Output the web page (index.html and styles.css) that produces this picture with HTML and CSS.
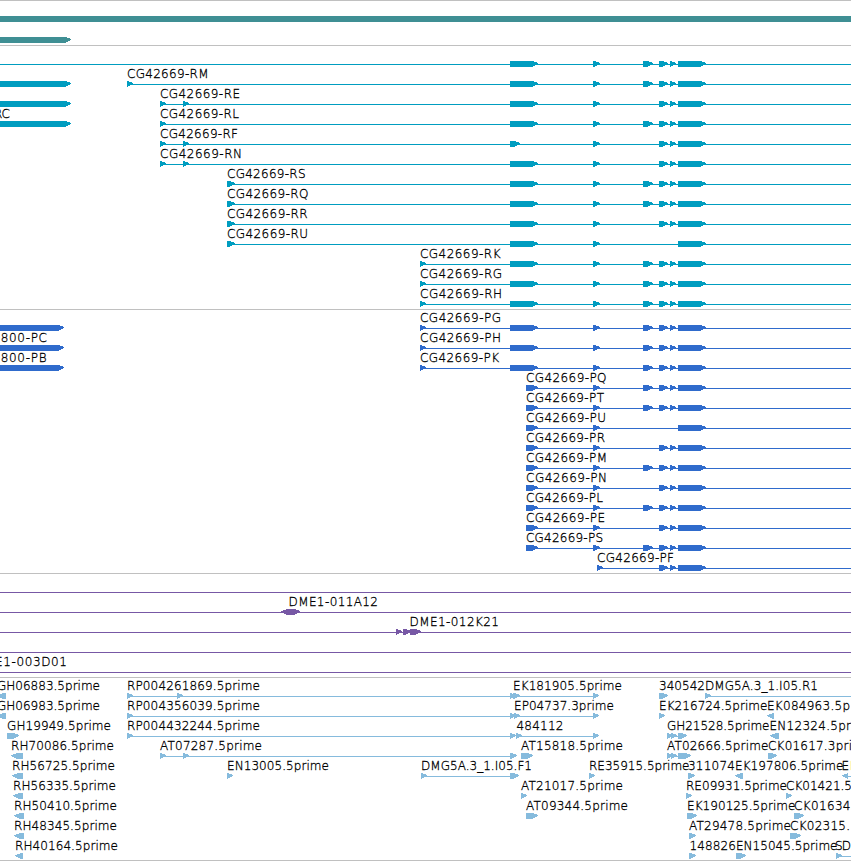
FILE: index.html
```
<!DOCTYPE html>
<html lang="en">
<head>
<meta charset="utf-8">
<title>Genome tracks</title>
<link rel="stylesheet" href="styles.css">
</head>
<body>
<main class="browser" id="browser"></main>
<script src="tracks.js"></script>
</body>
</html>
```
FILE: styles.css
```
body {
  margin: 0;
  background: #fff;
  overflow: hidden;
}

.browser {
  display: flex;
  flex-direction: column;
  width: 851px;
  border-bottom: 1px solid #c0c0c0;
}

.track {
  display: flex;
  flex-direction: column;
  padding: 1px 0 2px;
  border-top: 1px solid #c0c0c0;
}

.track-gene { color: #3f8f94; gap: 1px; }
.track-transcript { color: #009dc0; }
.track-protein { color: #2f6bcc; }
.track-clone { color: #7758a5; }
.track-est { color: #86bbdd; padding-bottom: 1px; }

.row {
  display: block;
  width: 851px;
  height: 20px;
  fill: currentColor;
  shape-rendering: crispEdges;
}

.row text {
  font: 200 12px "DejaVu Sans Light", "DejaVu Sans", sans-serif;
  fill: #000;
  stroke: #000;
  stroke-width: 0.3px;
  shape-rendering: auto;
}
```
FILE: tracks.js
```
// Feature: [start, end, direction]; direction is 1 (right, default), -1 (left), 2 (both) or 0 (plain).
// Label: [text, start, end]. Line: [start, end].
const A = [510, 538], B = [593, 600], C = [643, 653], D = [659, 668], E = [670, 676], F = [678, 706];
const all = [A, B, C, D, E, F], noC = [A, B, D, E, F];

const model = (name, start, end, first, exons, extra = []) => ({
  labels: name ? [[name, start, end]] : [],
  lines: [[start, 851]],
  features: [...first, ...exons, ...extra]
});
const left = (row, end, labels = []) => ({
  ...row, labels: [...row.labels, ...labels], features: [...row.features, [-10, end]]
});

const tracks = [
  { kind: "gene", rows: [
    { features: [[0, 851, 0]] },
    { features: [[-10, 71]] }
  ]},
  { kind: "transcript", rows: [
    model("", 0, 0, [], all),
    left(model("CG42669-RM", 127, 208.5, [[127, 133]], all), 71),
    left(model("CG42669-RE", 160, 240, [[160, 166], [183, 189]], noC), 71),
    left(model("CG42669-RL", 160, 239, [[160, 166]], all), 71, [["RC", -6, 10]]),
    model("CG42669-RF", 160, 238, [[160, 166], [183, 189], [510, 520]], [B, D, E, F]),
    model("CG42669-RN", 160, 242, [[160, 166], [183, 189]], noC),
    model("CG42669-RS", 227, 305.5, [[227, 235]], all),
    model("CG42669-RQ", 227, 308.5, [[227, 235]], all),
    model("CG42669-RR", 227, 307.5, [[227, 235]], noC),
    model("CG42669-RU", 227, 308, [[227, 235]], [A, B, F]),
    model("CG42669-RK", 420, 500.5, [[420, 426]], all),
    model("CG42669-RG", 420, 502, [[420, 426]], all),
    model("CG42669-RH", 420, 502, [[420, 426]], all)
  ]},
  { kind: "protein", rows: [
    left(model("CG42669-PG", 420, 501, [[420, 426]], all), 64),
    left(model("CG42669-PH", 420, 501, [[420, 426]], all), 64, [["800-PC", 0.7, 47]]),
    left(model("CG42669-PK", 420, 499, [[420, 426]], all), 64, [["800-PB", 0.7, 46.5]]),
    model("CG42669-PQ", 526, 606.5, [[526, 538]], [B, C, D, E, F]),
    model("CG42669-PT", 526, 604, [[526, 538]], [B, C, D, E, F]),
    model("CG42669-PU", 526, 606, [[526, 538]], [B, F]),
    model("CG42669-PR", 526, 605, [[526, 538]], [B, D, E, F]),
    model("CG42669-PM", 526, 607, [[526, 538]], [B, C, D, E, F]),
    model("CG42669-PN", 526, 607, [[526, 538]], [B, D, E, F]),
    model("CG42669-PL", 526, 603, [[526, 538]], [B, C, D, E, F]),
    model("CG42669-PE", 526, 605, [[526, 538]], [B, D, E, F]),
    model("CG42669-PS", 526, 603, [[526, 538]], [B, C, D, E, F]),
    model("CG42669-PF", 597, 674, [[597, 603]], [D, E, F])
  ]},
  { kind: "clone", rows: [
    { lines: [[0, 851]] },
    { lines: [[0, 851]], features: [[281, 300, 2]], labels: [["DME1-011A12", 288.5, 378]] },
    { lines: [[0, 851]], features: [[396, 402], [403, 411], [410, 421]], labels: [["DME1-012K21", 409.5, 499]] },
    { lines: [[0, 851]] },
    { lines: [[0, 851]], labels: [["E1-003D01", -5, 67]] }
  ]},
  { kind: "est", rows: [
    { lines: [[127, 595], [705, 851]],
      features: [[-3, 6, -1], [127, 133], [177, 183], [510, 516], [513, 520], [593, 599], [659, 668], [705, 711]],
      labels: [["GH06883.5prime", -3, 100], ["RP004261869.5prime", 127, 260], ["EK181905.5prime", 513, 622], ["340542", 659, 705], ["DMG5A.3_1.I05.R1", 705, 818]] },
    { lines: [[127, 595]],
      features: [[-3, 6, -1], [127, 133], [510, 516], [514, 520], [593, 599], [659, 665], [767, 774, -1]],
      labels: [["GH06983.5prime", -3, 100], ["RP004356039.5prime", 127, 260], ["EP04737.3prime", 514, 614], ["EK216724.5prime", 659, 767.5], ["EK084963.5p", 767, 850]] },
    { lines: [[127, 512], [516, 595], [667, 680]],
      features: [[7, 19], [127, 133], [510, 516], [516, 522], [593, 599], [667, 673], [671, 677], [678, 687], [770, 779, -1]],
      labels: [["GH19949.5prime", 7, 111], ["RP004432244.5prime", 127, 260], ["484112", 516.5, 563.5], ["GH21528.5prime", 667, 769.5], ["EN12324.5pr", 769.5, 851]] },
    { lines: [[160, 512], [667, 680]],
      features: [[11, 23, -1], [160, 166], [183, 189], [510, 517], [521, 533], [667, 673], [671, 677], [678, 691], [768, 777]],
      labels: [["RH70086.5prime", 11, 114], ["AT07287.5prime", 160, 262], ["AT15818.5prime", 521, 623], ["AT02666.5prime", 667, 768.5], ["CK01617.3pri", 768, 852]] },
    { lines: [[421, 512], [844, 851]],
      features: [[12, 23, -1], [227, 233], [421, 427], [510, 519], [589, 595], [688, 695], [735, 743, -1], [842, 848, -1]],
      labels: [["RH56725.5prime", 12, 115], ["EN13005.5prime", 227, 329], ["DMG5A.3_1.I05.F1", 421, 532], ["RE35915.5prime", 589, 689.5], ["311074", 688, 735], ["EK197806.5prime", 735, 843.5], ["EK", 841.5, 857]] },
    { features: [[13, 23, -1], [521, 527], [686, 692], [786, 792]],
      labels: [["RH56335.5prime", 13, 116], ["AT21017.5prime", 521, 623], ["RE09931.5prime", 686, 787], ["CK01421.5", 786, 852]] },
    { features: [[14, 24, -1], [526, 538], [687, 697], [794, 804]],
      labels: [["RH50410.5prime", 14, 117], ["AT09344.5prime", 526, 628], ["EK190125.5prime", 687, 795.5], ["CK01634", 794, 850.5]] },
    { features: [[14, 24, -1], [689, 696], [790, 801]],
      labels: [["RH48345.5prime", 14, 117], ["AT29478.5prime", 689, 791], ["CK02315.", 790, 850]] },
    { lines: [[836, 851]],
      features: [[15, 23, -1], [689, 696], [736, 746], [836, 842]],
      labels: [["RH40164.5prime", 15, 118], ["148826", 689.5, 736], ["EN15045.5prime", 736, 837.5], ["SD", 835, 851]] }
  ]}
];

const SVG = "http://www.w3.org/2000/svg";
function add(parent, tag, attrs) {
  const el = document.createElementNS(SVG, tag);
  for (const key in attrs) el.setAttribute(key, attrs[key]);
  parent.appendChild(el);
  return el;
}

// Box with a blunt one-pixel tip on each pointed side.
function outline([start, end, dir = 1]) {
  const head = Math.min(6, end - start);
  const pointsLeft = dir === -1 || dir === 2;
  const pointsRight = dir === 1 || dir === 2;
  const l = pointsLeft ? start + head : start;
  const r = pointsRight ? end - head : end;
  const right = pointsRight ? `${end},16 ${end},17` : "";
  const leftTip = pointsLeft ? `${start},17 ${start},16` : "";
  return `${l},14 ${r},14 ${right} ${r},20 ${l},20 ${leftTip}`;
}

const browser = document.getElementById("browser");
for (const track of tracks) {
  const section = document.createElement("section");
  section.className = `track track-${track.kind}`;
  for (const row of track.rows) {
    const svg = add(section, "svg", { class: "row", viewBox: "0 0 851 20" });
    for (const [start, end] of row.lines || []) {
      add(svg, "rect", { x: start, y: 17, width: end - start, height: 1 });
    }
    for (const feature of row.features || []) {
      add(svg, "polygon", { points: outline(feature) });
    }
    for (const [text, start, end] of row.labels || []) {
      add(svg, "text", { x: start, y: 11, textLength: end - start }).textContent = text;
    }
  }
  browser.appendChild(section);
}
```
